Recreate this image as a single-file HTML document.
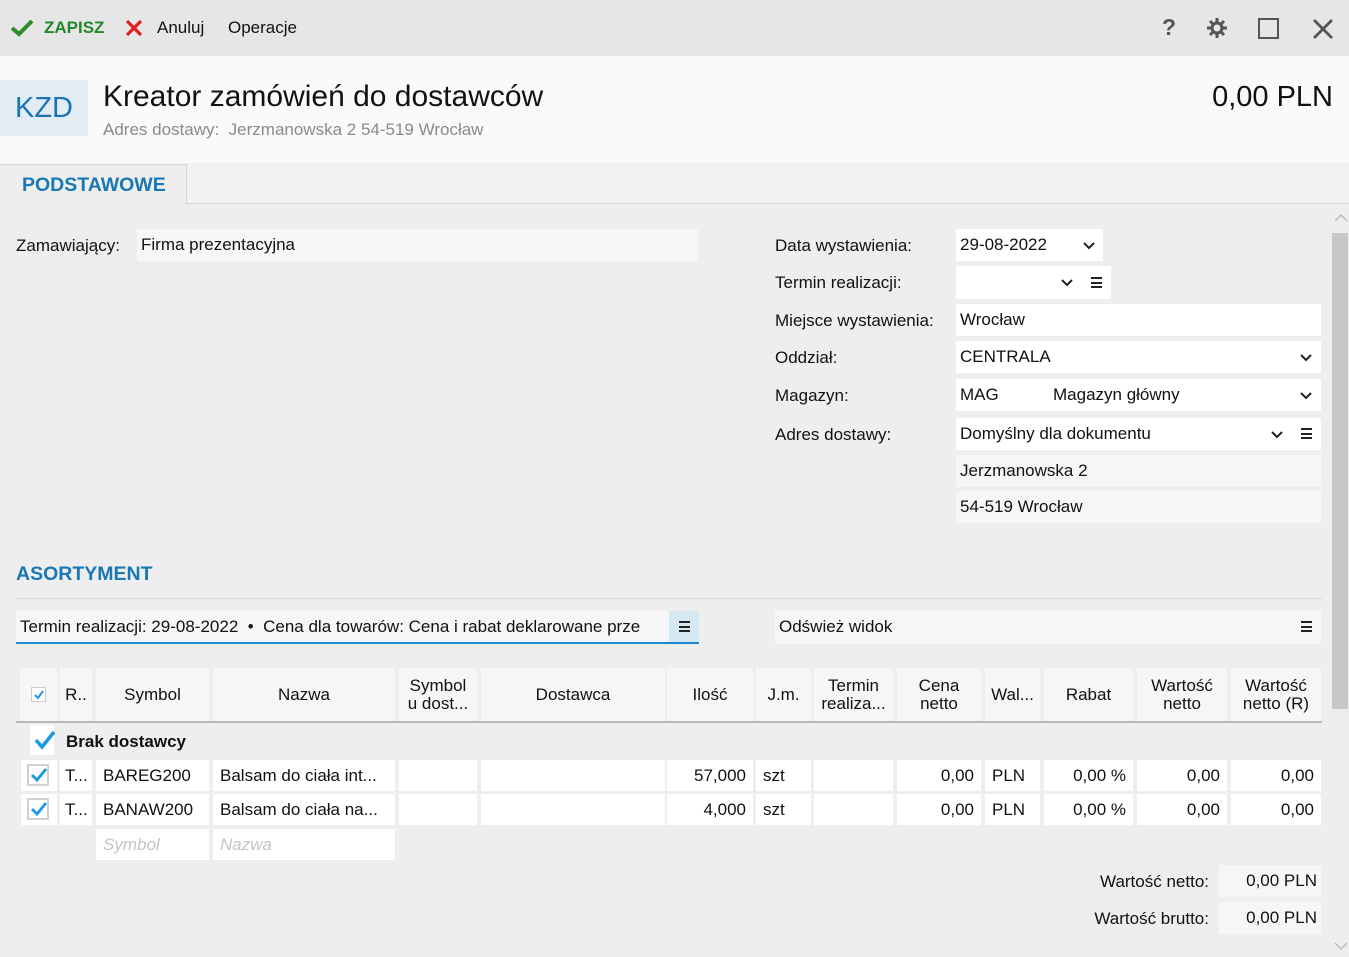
<!DOCTYPE html>
<html><head><meta charset="utf-8"><style>
*{margin:0;padding:0;box-sizing:border-box}
body{width:1349px;height:957px;overflow:hidden;background:#eeeeee;font-family:"Liberation Sans",sans-serif;font-size:17px;color:#111;position:relative}
.a{position:absolute}
.f{position:absolute;background:#fff;height:32px;line-height:32px;padding-left:4px;white-space:nowrap}
.g{background:#f6f6f6}
.l{position:absolute;line-height:20px;white-space:nowrap}
.chev{position:absolute;width:12px;height:8px}
.ham{position:absolute;width:11px;height:11px;border-top:2px solid #222;border-bottom:2px solid #222}
.ham:after{content:"";position:absolute;left:0;right:0;top:2.5px;border-top:2px solid #222}
.th{position:absolute;top:668px;height:53px;background:#f6f6f6;text-align:center;display:flex;align-items:center;justify-content:center;line-height:18px;font-size:17px}
.td{position:absolute;height:31px;line-height:31px;background:#fff;white-space:nowrap;overflow:hidden;padding:0 7px}
.r{text-align:right}
.cb{position:absolute;width:22px;height:22px;border:2px solid #d0d0d0;background:#fff}
</style></head><body>
<div class="a" style="left:0;top:0;width:1349px;height:56px;background:#e6e6e6"></div>
<svg class="a" style="left:10px;top:19px" width="24" height="18"><polyline points="2,9 9,15 22,2" fill="none" stroke="#2e8b2e" stroke-width="4"/></svg>
<div class="l" style="left:44px;top:18px;color:#23882a;font-weight:bold;font-size:17px">ZAPISZ</div>
<svg class="a" style="left:125px;top:19px" width="18" height="18"><path d="M2,2 L16,16 M16,2 L2,16" stroke="#e02020" stroke-width="3.2"/></svg>
<div class="l" style="left:157px;top:18px">Anuluj</div>
<div class="l" style="left:228px;top:18px">Operacje</div>
<div class="l" style="left:1162px;top:17px;font-size:23px;font-weight:bold;color:#555">?</div>
<svg class="a" style="left:1206px;top:17px" width="22" height="22" viewBox="0 0 22 22"><g stroke="#555" stroke-width="3"><line x1="11" y1="1" x2="11" y2="21"/><line x1="1" y1="11" x2="21" y2="11"/><line x1="4" y1="4" x2="18" y2="18"/><line x1="18" y1="4" x2="4" y2="18"/></g><circle cx="11" cy="11" r="6.5" fill="#555"/><circle cx="11" cy="11" r="3.5" fill="#e6e6e6"/></svg>
<div class="a" style="left:1258px;top:18px;width:21px;height:21px;border:2.5px solid #555"></div>
<svg class="a" style="left:1313px;top:19px" width="20" height="20"><path d="M1,1 L19,19 M19,1 L1,19" stroke="#555" stroke-width="2.8"/></svg>
<div class="a" style="left:0;top:56px;width:1349px;height:107px;background:#fafafa"></div>
<div class="a" style="left:0;top:80px;width:88px;height:56px;background:#e1ecf4;color:#1a74b8;font-size:29px;line-height:56px;text-align:center">KZD</div>
<div class="l" style="left:103px;top:80px;font-size:30px;line-height:34px">Kreator zamówień do dostawców</div>
<div class="l" style="left:103px;top:120px;color:#8a8a8a;font-size:17px">Adres dostawy:&nbsp; Jerzmanowska 2 54-519 Wrocław</div>
<div class="l" style="right:16px;top:80px;font-size:29px;line-height:34px">0,00 PLN</div>
<div class="a" style="left:0;top:163px;width:1349px;height:41px;background:#f2f2f2;border-bottom:1px solid #d6d6d6"></div>
<div class="a" style="left:0;top:164px;width:187px;height:41px;background:#eeeeee;border:1px solid #d6d6d6;border-bottom:none;border-left:none"></div>
<div class="l" style="left:22px;top:175px;color:#1878b5;font-weight:bold;font-size:19.5px">PODSTAWOWE</div>
<svg class="a" style="left:1334px;top:214px" width="14" height="8"><polyline points="1,7 7,1 13,7" fill="none" stroke="#bbb" stroke-width="1.5"/></svg>
<div class="a" style="left:1332px;top:233px;width:16px;height:476px;background:#c8c8c8"></div>
<svg class="a" style="left:1334px;top:942px" width="14" height="8"><polyline points="1,1 7,7 13,1" fill="none" stroke="#bbb" stroke-width="1.5"/></svg>
<div class="l" style="left:16px;top:236px">Zamawiający:</div>
<div class="f g" style="left:137px;top:229px;width:561px">Firma prezentacyjna</div>
<div class="l" style="left:775px;top:236px">Data wystawienia:</div>
<div class="f" style="left:956px;top:229px;width:147px">29-08-2022</div>
<svg class="chev" style="left:1083px;top:242px"><polyline points="1,1 6,6 11,1" fill="none" stroke="#222" stroke-width="2"/></svg>
<div class="l" style="left:775px;top:273px">Termin realizacji:</div>
<div class="f" style="left:956px;top:266px;width:155px;height:33px"></div>
<svg class="chev" style="left:1061px;top:279px"><polyline points="1,1 6,6 11,1" fill="none" stroke="#222" stroke-width="2"/></svg>
<div class="ham" style="left:1091px;top:277px"></div>
<div class="l" style="left:775px;top:311px">Miejsce wystawienia:</div>
<div class="f" style="left:956px;top:304px;width:365px">Wrocław</div>
<div class="l" style="left:775px;top:348px">Oddział:</div>
<div class="f" style="left:956px;top:341px;width:365px">CENTRALA</div>
<svg class="chev" style="left:1300px;top:354px"><polyline points="1,1 6,6 11,1" fill="none" stroke="#222" stroke-width="2"/></svg>
<div class="l" style="left:775px;top:386px">Magazyn:</div>
<div class="f" style="left:956px;top:379px;width:365px">MAG<span style="position:absolute;left:97px">Magazyn główny</span></div>
<svg class="chev" style="left:1300px;top:392px"><polyline points="1,1 6,6 11,1" fill="none" stroke="#222" stroke-width="2"/></svg>
<div class="l" style="left:775px;top:425px">Adres dostawy:</div>
<div class="f" style="left:956px;top:418px;width:365px">Domyślny dla dokumentu</div>
<svg class="chev" style="left:1271px;top:431px"><polyline points="1,1 6,6 11,1" fill="none" stroke="#222" stroke-width="2"/></svg>
<div class="ham" style="left:1301px;top:428px"></div>
<div class="f g" style="left:956px;top:455px;width:365px">Jerzmanowska 2</div>
<div class="f g" style="left:956px;top:491px;width:365px">54-519 Wrocław</div>
<div class="l" style="left:16px;top:564px;color:#1878b5;font-weight:bold;font-size:19.5px">ASORTYMENT</div>
<div class="a" style="left:16px;top:598px;width:1306px;border-top:1px solid #d8d8d8"></div>
<div class="f g" style="left:16px;top:611px;width:653px;height:33px;overflow:hidden;border-bottom:2px solid #1e88d0">Termin realizacji: 29-08-2022 &nbsp;•&nbsp; Cena dla towarów: Cena i rabat deklarowane prze</div>
<div class="a" style="left:669px;top:611px;width:30px;height:33px;background:#d6e8f4;border-bottom:2px solid #1e88d0"></div>
<div class="ham" style="left:679px;top:621px"></div>
<div class="f g" style="left:775px;top:611px;width:546px;height:33px">Odśwież widok</div>
<div class="ham" style="left:1301px;top:621px"></div>
<div class="th" style="left:20px;width:37px"><span style="width:15px;height:15px;border:1px solid #ccc;background:#fff;display:block;position:relative"><svg class="a" style="left:1px;top:1px" width="12" height="12"><polyline points="2,6 5,9 10,2" fill="none" stroke="#1a9ae0" stroke-width="2"/></svg></span></div>
<div class="th" style="left:60px;width:32px">R..</div>
<div class="th" style="left:96px;width:113px">Symbol</div>
<div class="th" style="left:213px;width:182px">Nazwa</div>
<div class="th" style="left:399px;width:78px">Symbol<br>u dost...</div>
<div class="th" style="left:481px;width:184px">Dostawca</div>
<div class="th" style="left:667px;width:86px">Ilość</div>
<div class="th" style="left:756px;width:55px">J.m.</div>
<div class="th" style="left:814px;width:79px">Termin<br>realiza...</div>
<div class="th" style="left:897px;width:84px">Cena<br>netto</div>
<div class="th" style="left:985px;width:55px">Wal...</div>
<div class="th" style="left:1044px;width:89px">Rabat</div>
<div class="th" style="left:1137px;width:90px">Wartość<br>netto</div>
<div class="th" style="left:1231px;width:90px">Wartość<br>netto (R)</div>
<div class="a" style="left:16px;top:721px;width:1306px;border-top:2px solid #b8b8b8"></div>
<div class="a" style="left:30px;top:725px;width:24px;height:30px;background:#fff"></div>
<svg class="a" style="left:33px;top:729px" width="24" height="22"><polyline points="3,11 9,18 21,3" fill="none" stroke="#1a9ae0" stroke-width="3.5"/></svg>
<div class="l" style="left:66px;top:732px;font-weight:bold">Brak dostawcy</div>
<div class="a" style="left:21px;top:760px;width:36px;height:31px;background:#fff"></div>
<div class="cb" style="left:27px;top:764px"></div>
<svg class="a" style="left:30px;top:767px" width="18" height="16"><polyline points="2,8 7,13 16,2" fill="none" stroke="#1a9ae0" stroke-width="2.8"/></svg>
<div class="td g" style="left:60px;top:760px;width:32px;padding:0 5px">T...</div>
<div class="td g" style="left:96px;top:760px;width:113px">BAREG200</div>
<div class="td g" style="left:213px;top:760px;width:182px">Balsam do ciała int...</div>
<div class="td g" style="left:399px;top:760px;width:78px"></div>
<div class="td" style="left:481px;top:760px;width:184px"></div>
<div class="td r" style="left:667px;top:760px;width:86px">57,000</div>
<div class="td" style="left:756px;top:760px;width:55px">szt</div>
<div class="td" style="left:814px;top:760px;width:79px"></div>
<div class="td r" style="left:897px;top:760px;width:84px">0,00</div>
<div class="td" style="left:985px;top:760px;width:55px">PLN</div>
<div class="td r" style="left:1044px;top:760px;width:89px">0,00 %</div>
<div class="td r" style="left:1137px;top:760px;width:90px">0,00</div>
<div class="td r" style="left:1231px;top:760px;width:90px">0,00</div>
<div class="a" style="left:21px;top:794px;width:36px;height:31px;background:#fff"></div>
<div class="cb" style="left:27px;top:798px"></div>
<svg class="a" style="left:30px;top:801px" width="18" height="16"><polyline points="2,8 7,13 16,2" fill="none" stroke="#1a9ae0" stroke-width="2.8"/></svg>
<div class="td g" style="left:60px;top:794px;width:32px;padding:0 5px">T...</div>
<div class="td g" style="left:96px;top:794px;width:113px">BANAW200</div>
<div class="td g" style="left:213px;top:794px;width:182px">Balsam do ciała na...</div>
<div class="td g" style="left:399px;top:794px;width:78px"></div>
<div class="td" style="left:481px;top:794px;width:184px"></div>
<div class="td r" style="left:667px;top:794px;width:86px">4,000</div>
<div class="td" style="left:756px;top:794px;width:55px">szt</div>
<div class="td" style="left:814px;top:794px;width:79px"></div>
<div class="td r" style="left:897px;top:794px;width:84px">0,00</div>
<div class="td" style="left:985px;top:794px;width:55px">PLN</div>
<div class="td r" style="left:1044px;top:794px;width:89px">0,00 %</div>
<div class="td r" style="left:1137px;top:794px;width:90px">0,00</div>
<div class="td r" style="left:1231px;top:794px;width:90px">0,00</div>
<div class="td" style="left:96px;top:829px;width:113px;color:#c4c4c4;font-style:italic">Symbol</div>
<div class="td" style="left:213px;top:829px;width:182px;color:#c4c4c4;font-style:italic">Nazwa</div>
<div class="l" style="right:140px;top:872px">Wartość netto:</div>
<div class="f g r" style="left:1219px;top:865px;width:102px;padding-right:4px">0,00 PLN</div>
<div class="l" style="right:140px;top:909px">Wartość brutto:</div>
<div class="f g r" style="left:1219px;top:902px;width:102px;padding-right:4px">0,00 PLN</div>
</body></html>
